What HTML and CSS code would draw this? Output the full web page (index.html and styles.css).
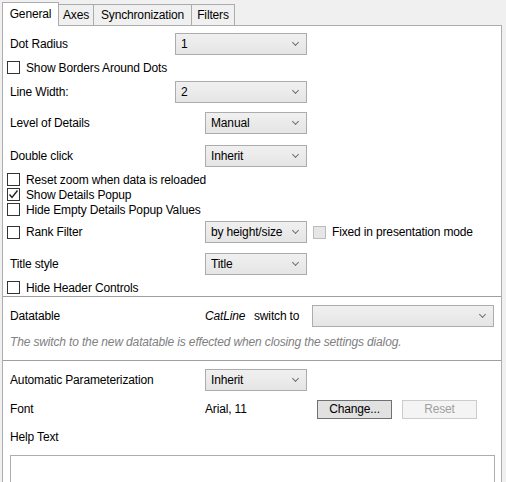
FILE: index.html
```html
<!DOCTYPE html>
<html>
<head>
<meta charset="utf-8">
<link rel="stylesheet" href="styles.css">
</head>
<body>
<div class="window">
  <div class="tabs">
    <div class="tab tab-general active">General</div>
    <div class="tab tab-axes">Axes</div>
    <div class="tab tab-sync">Synchronization</div>
    <div class="tab tab-filters">Filters</div>
  </div>
  <div class="panel">
    <div class="row row-combo r-dot">
      <span class="label label-narrow">Dot Radius</span>
      <div class="combo combo-wide"><span>1</span><i class="chev"></i></div>
    </div>
    <div class="row row-check r-borders">
      <span class="check"></span><span>Show Borders Around Dots</span>
    </div>
    <div class="row row-combo r-line">
      <span class="label label-narrow">Line Width:</span>
      <div class="combo combo-wide"><span>2</span><i class="chev"></i></div>
    </div>
    <div class="row row-combo r-level">
      <span class="label">Level of Details</span>
      <div class="combo"><span>Manual</span><i class="chev"></i></div>
    </div>
    <div class="row row-combo r-double">
      <span class="label">Double click</span>
      <div class="combo"><span>Inherit</span><i class="chev"></i></div>
    </div>
    <div class="row row-check r-reset">
      <span class="check"></span><span>Reset zoom when data is reloaded</span>
    </div>
    <div class="row row-check">
      <span class="check checked"><svg viewBox="0 0 13 13" width="13" height="13"><polyline points="2.5,6.5 5,9.5 10.5,2.5" fill="none" stroke="#222" stroke-width="1.4"/></svg></span><span>Show Details Popup</span>
    </div>
    <div class="row row-check">
      <span class="check"></span><span>Hide Empty Details Popup Values</span>
    </div>
    <div class="row row-combo r-rank">
      <span class="check-wrap"><span class="check"></span><span>Rank Filter</span></span>
      <div class="combo"><span>by height/size</span><i class="chev"></i></div>
      <span class="check disabled"></span><span class="fixed-text">Fixed in presentation mode</span>
    </div>
    <div class="row row-combo r-title">
      <span class="label">Title style</span>
      <div class="combo"><span>Title</span><i class="chev"></i></div>
    </div>
    <div class="row row-check r-header">
      <span class="check"></span><span>Hide Header Controls</span>
    </div>
    <div class="sep"></div>
    <div class="row row-combo r-datatable">
      <span class="label">Datatable</span>
      <span class="catline">CatLine</span>
      <span class="switch">switch to</span>
      <div class="combo combo-data"><span></span><i class="chev"></i></div>
    </div>
    <div class="note">The switch to the new datatable is effected when closing the settings dialog.</div>
    <div class="sep sep2"></div>
    <div class="row row-combo r-auto">
      <span class="label">Automatic Parameterization</span>
      <div class="combo"><span>Inherit</span><i class="chev"></i></div>
    </div>
    <div class="row row-font">
      <span class="label">Font</span>
      <span class="font-value">Arial, 11</span>
      <button class="btn">Change...</button>
      <button class="btn btn-disabled">Reset</button>
    </div>
    <div class="row row-help">
      <span class="label">Help Text</span>
    </div>
    <div class="textarea"></div>
  </div>
</div>
</body>
</html>
```

FILE: styles.css
```css
* { box-sizing: border-box; }
html, body {
  margin: 0;
  padding: 0;
  width: 506px;
  height: 482px;
  overflow: hidden;
  background: #f0f0f0;
  font-family: "Liberation Sans", Arial, sans-serif;
  font-size: 12px;
  letter-spacing: -0.15px;
  color: #000;
}
.window {
  padding-left: 2px;
  width: 506px;
}
.tabs {
  display: flex;
  align-items: flex-end;
  height: 25px;
}
.tab {
  height: 21px;
  border: 1px solid #acacac;
  border-bottom: none;
  background: #f0f0f0;
  display: flex;
  align-items: center;
  justify-content: center;
  margin-left: -1px;
  margin-bottom: 0;
}
.tab.active {
  height: 24px;
  margin-left: 0;
  margin-bottom: -1px;
  background: #fff;
  position: relative;
  z-index: 2;
  padding-bottom: 2px;
}
.tab-general { width: 57px; }
.tab-axes { width: 36px; margin-left: -1px; }
.tab-sync { width: 99px; }
.tab-filters { width: 44px; }

.panel {
  width: 500px;
  height: 457px;
  background: #fff;
  border: 1px solid #adadad;
  border-bottom: none;
  position: relative;
  z-index: 1;
  padding-top: 7px;
}
.row {
  display: flex;
  align-items: center;
  padding-left: 7px;
}
.row-combo { height: 22px; }
.row-check { height: 15px; padding-left: 4px; }
.label { width: 195px; flex: none; }
.label-narrow { width: 165px; }

.r-borders { margin-top: 5px; }
.r-line { margin-top: 6px; }
.r-level { margin-top: 9px; }
.r-double { margin-top: 11px; }
.r-reset { margin-top: 5px; }
.r-rank { margin-top: 4px; padding-left: 4px; }
.r-title { margin-top: 10px; }
.r-header { margin-top: 5px; }
.r-datatable { margin-top: 8px; }
.r-auto { margin-top: 8px; }

.check {
  width: 13px;
  height: 13px;
  border: 1px solid #333;
  background: #fff;
  flex: none;
  margin-right: 6px;
  display: inline-flex;
}
.check svg { margin: -1px; }
.check.disabled {
  background: #e6e6e6;
  border-color: #bcbcbc;
  margin-left: 6px;
}
.check-wrap {
  width: 198px;
  flex: none;
  display: flex;
  align-items: center;
}
.fixed-text { color: #000; }

.combo {
  width: 102px;
  height: 22px;
  border: 1px solid #acacac;
  background: linear-gradient(#f0f0f0, #e5e5e5);
  display: flex;
  align-items: center;
  justify-content: space-between;
  padding: 0 8px 0 5px;
  flex: none;
}
.combo-wide { width: 132px; }
.combo-data { width: 182px; }
.chev {
  width: 5px;
  height: 5px;
  border-right: 1px solid #707070;
  border-bottom: 1px solid #707070;
  transform: rotate(45deg);
  margin-top: -3px;
}

.sep {
  height: 1px;
  background: #a0a0a0;
  margin-top: 1px;
}
.sep2 { margin-top: 10px; }

.catline { font-style: italic; width: 49px; flex: none; }
.switch { width: 58px; flex: none; }

.note {
  margin-top: 7px;
  padding-left: 7px;
  height: 16px;
  line-height: 16px;
  font-style: italic;
  color: #808080;
}

.row-font { height: 20px; margin-top: 8px; }
.font-value { width: 112px; flex: none; }
.btn {
  font-family: inherit;
  font-size: 12px;
  letter-spacing: inherit;
  width: 75px;
  height: 19px;
  border: 1px solid #707070;
  background: #e1e1e1;
  color: #000;
  padding: 0;
  margin: 0 10px 0 0;
  border-radius: 0;
}
.btn-disabled {
  border-color: #cccccc;
  background: #f4f4f4;
  color: #a0a0a0;
}
.row-help { height: 16px; margin-top: 10px; }
.textarea {
  margin: 10px 0 0 7px;
  width: 485px;
  height: 28px;
  border: 1px solid #abadb3;
  border-bottom: none;
  background: #fff;
}
```
